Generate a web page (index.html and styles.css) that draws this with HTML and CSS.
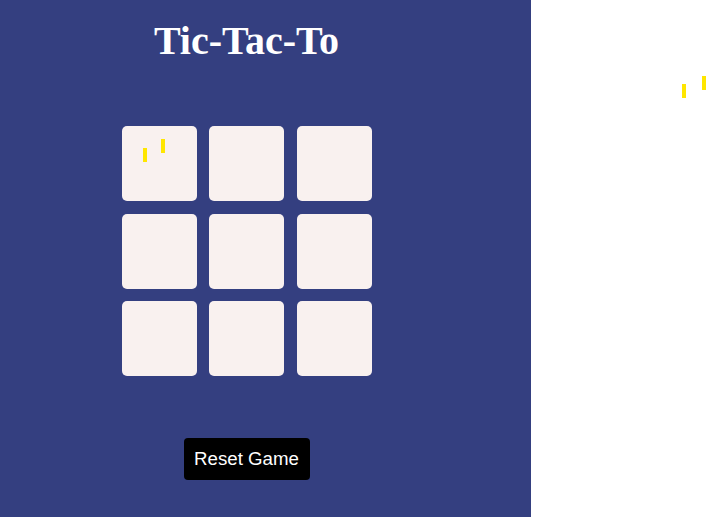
FILE: index.html
```html
<!DOCTYPE html>
<html>
<head>
<meta charset="utf-8">
<link rel="stylesheet" href="styles.css">
</head>
<body>
<main class="panel">
  <h1 class="title">Tic-Tac-To</h1>
  <div class="board">
    <div class="cell"></div>
    <div class="cell"></div>
    <div class="cell"></div>
    <div class="cell"></div>
    <div class="cell"></div>
    <div class="cell"></div>
    <div class="cell"></div>
    <div class="cell"></div>
    <div class="cell"></div>
  </div>
  <button class="reset">Reset Game</button>
</main>
<div class="mark mark-a"></div>
<div class="mark mark-b"></div>
<div class="mark mark-c"></div>
<div class="mark mark-d"></div>
</body>
</html>
```
FILE: styles.css
```css
html, body {
  margin: 0;
  padding: 0;
  background: #ffffff;
  height: 100%;
  overflow: hidden;
}
.panel {
  width: 531px;
  height: 517px;
  background: #343f80;
  box-sizing: border-box;
  padding: 18px 38px 0 0;
  display: flex;
  flex-direction: column;
  align-items: center;
}
.title {
  margin: 0;
  font-family: "Liberation Serif", serif;
  font-weight: bold;
  font-size: 40px;
  line-height: 46px;
  color: #ffffff;
}
.board {
  margin-top: 62px;
  display: grid;
  grid-template-columns: repeat(3, 75px);
  grid-template-rows: repeat(3, 75px);
  column-gap: 12.5px;
  row-gap: 12.5px;
}
.cell {
  background: #f9f1ef;
  border-radius: 5px;
}
.reset {
  margin-top: 62px;
  width: 126px;
  height: 42px;
  background: #000000;
  color: #ffffff;
  border: none;
  border-radius: 4px;
  font-family: "Liberation Sans", Arial, sans-serif;
  font-size: 18.7px;
  padding: 0;
}
.mark {
  position: absolute;
  width: 4px;
  height: 14px;
  background: #ffe600;
}
.mark-a { left: 143px; top: 148px; }
.mark-b { left: 161px; top: 139px; }
.mark-c { left: 682px; top: 84px; }
.mark-d { left: 702px; top: 76px; }
```
